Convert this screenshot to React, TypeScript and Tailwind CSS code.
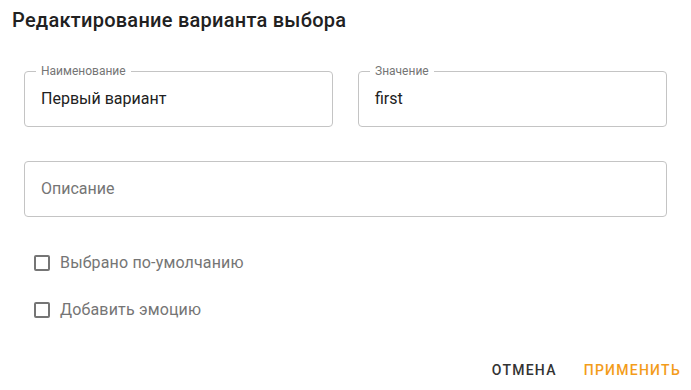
import React from 'react';

function OutlinedField({ label, value, placeholder }: { label?: string; value?: string; placeholder?: string }) {
  return (
    <div className="relative flex-1">
      <div className="h-[56px] rounded-[4px] border border-[#c4c4c4] px-[16px] flex items-center">
        {value ? (
          <span className="text-[16px] text-[#212121]">{value}</span>
        ) : (
          <span className="text-[16px] text-[#757575]">{placeholder}</span>
        )}
      </div>
      {label && (
        <span className="absolute left-[12px] top-[-8px] bg-white px-[5px] text-[12px] leading-[16px] text-[#757575]">
          {label}
        </span>
      )}
    </div>
  );
}

function CheckRow({ label }: { label: string }) {
  return (
    <label className="flex items-center h-[47px] pl-[10px] gap-[10px]">
      <span className="block w-[16px] h-[16px] rounded-[2px] border-2 border-[#757575]" />
      <span className="text-[16px] tracking-[0.01em] text-[#757575]">{label}</span>
    </label>
  );
}

export default function App() {
  return (
    <div className="w-[691px] h-[390px] bg-white font-['Roboto',sans-serif] flex flex-col">
      <h2 className="px-[12px] pt-[8px] text-[20px] leading-[24px] font-medium tracking-[0.0125em] text-[#212121]">
        Редактирование варианта выбора
      </h2>
      <div className="px-[24px] pt-[39px] flex flex-col">
        <div className="flex gap-[25px]">
          <OutlinedField label="Наименование" value="Первый вариант" />
          <OutlinedField label="Значение" value="first" />
        </div>
        <div className="pt-[34px] flex">
          <OutlinedField placeholder="Описание" />
        </div>
        <div className="pt-[22px] flex flex-col">
          <CheckRow label="Выбрано по-умолчанию" />
          <CheckRow label="Добавить эмоцию" />
        </div>
      </div>
      <div className="mt-auto pb-[2px] pr-[2px] flex justify-end gap-[11px]">
        <button className="px-[8px] h-[36px] text-[14px] font-medium tracking-[0.09em] uppercase text-[#333333]">
          Отмена
        </button>
        <button className="px-[8px] h-[36px] text-[14px] font-medium tracking-[0.09em] uppercase text-[#f39c1a]">
          Применить
        </button>
      </div>
    </div>
  );
}
